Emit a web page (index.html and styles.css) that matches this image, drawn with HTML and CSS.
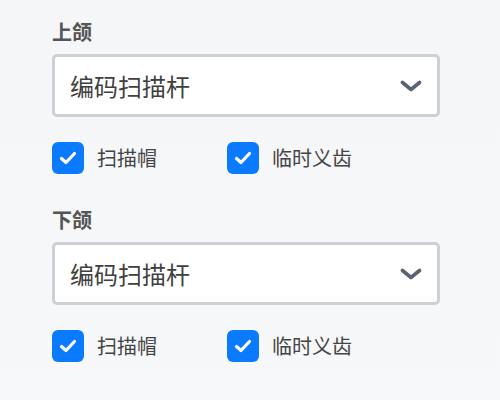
FILE: index.html
```html
<!DOCTYPE html>
<html lang="zh-CN">
<head>
<meta charset="utf-8">
<link rel="stylesheet" href="styles.css">
</head>
<body>
<div class="panel">
  <section class="group">
    <div class="label">上颌</div>
    <div class="select">
      <span class="value">编码扫描杆</span>
      <svg class="chev" width="22" height="12" viewBox="0 0 22 12"><path d="M2.5 2.5 L11 9.5 L19.5 2.5" fill="none" stroke="#5a6370" stroke-width="3.6" stroke-linecap="round" stroke-linejoin="round"/></svg>
    </div>
    <div class="checks">
      <label class="check"><span class="box"><svg width="20" height="16" viewBox="0 0 20 16"><path d="M3.5 8.5 L8 12.5 L16.5 3.5" fill="none" stroke="#fff" stroke-width="3.2" stroke-linecap="round" stroke-linejoin="round"/></svg></span><span class="text">扫描帽</span></label>
      <label class="check"><span class="box"><svg width="20" height="16" viewBox="0 0 20 16"><path d="M3.5 8.5 L8 12.5 L16.5 3.5" fill="none" stroke="#fff" stroke-width="3.2" stroke-linecap="round" stroke-linejoin="round"/></svg></span><span class="text">临时义齿</span></label>
    </div>
  </section>
  <section class="group">
    <div class="label">下颌</div>
    <div class="select">
      <span class="value">编码扫描杆</span>
      <svg class="chev" width="22" height="12" viewBox="0 0 22 12"><path d="M2.5 2.5 L11 9.5 L19.5 2.5" fill="none" stroke="#5a6370" stroke-width="3.6" stroke-linecap="round" stroke-linejoin="round"/></svg>
    </div>
    <div class="checks">
      <label class="check"><span class="box"><svg width="20" height="16" viewBox="0 0 20 16"><path d="M3.5 8.5 L8 12.5 L16.5 3.5" fill="none" stroke="#fff" stroke-width="3.2" stroke-linecap="round" stroke-linejoin="round"/></svg></span><span class="text">扫描帽</span></label>
      <label class="check"><span class="box"><svg width="20" height="16" viewBox="0 0 20 16"><path d="M3.5 8.5 L8 12.5 L16.5 3.5" fill="none" stroke="#fff" stroke-width="3.2" stroke-linecap="round" stroke-linejoin="round"/></svg></span><span class="text">临时义齿</span></label>
    </div>
  </section>
</div>
</body>
</html>
```
FILE: styles.css
```css
html, body {
  margin: 0;
  height: 100%;
}
body {
  background: linear-gradient(180deg, #f5f6f7 0%, #f7f8f9 100%);
  font-family: "Noto Sans CJK SC", "Noto Sans", sans-serif;
  color: #444;
}
.panel {
  padding: 20px 0 0 52px;
  width: 388px;
  display: flex;
  flex-direction: column;
  gap: 34px;
}
.group {
  display: flex;
  flex-direction: column;
}
.label {
  font-size: 20px;
  line-height: 24px;
  font-weight: bold;
  color: #555;
  margin-bottom: 10px;
}
.select {
  box-sizing: border-box;
  height: 63px;
  border: 3px solid #cdd0d5;
  border-radius: 5px;
  background: #fff;
  display: flex;
  align-items: center;
  justify-content: space-between;
  padding: 0 15px 0 15px;
}
.value {
  font-size: 24px;
  line-height: 30px;
  color: #3f3f3f;
}
.chev {
  display: block;
}
.checks {
  display: flex;
  margin-top: 25px;
}
.check {
  display: flex;
  align-items: center;
  width: 175px;
}
.box {
  width: 32px;
  height: 32px;
  border-radius: 6px;
  background: #0a7bff;
  display: flex;
  align-items: center;
  justify-content: center;
  flex: none;
}
.box svg {
  display: block;
}
.text {
  margin-left: 13px;
  font-size: 20px;
  line-height: 32px;
  color: #444;
}
```
